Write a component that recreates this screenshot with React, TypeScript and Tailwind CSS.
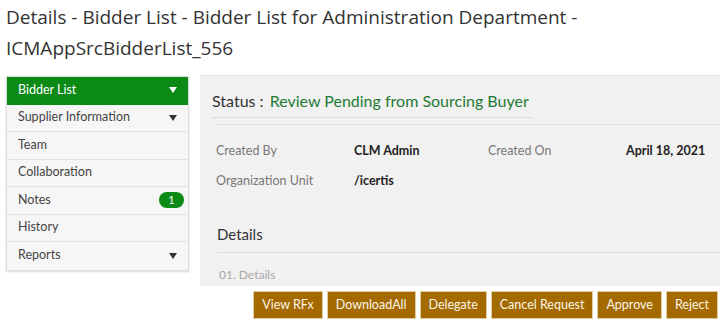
const navItems = [
  { label: 'Bidder List', caret: true, active: true },
  { label: 'Supplier Information', caret: true },
  { label: 'Team' },
  { label: 'Collaboration' },
  { label: 'Notes', badge: '1' },
  { label: 'History' },
  { label: 'Reports', caret: true },
]

const actions = ['View RFx', 'DownloadAll', 'Delegate', 'Cancel Request', 'Approve', 'Reject']

function Caret({ white }: { white?: boolean }) {
  return (
    <svg width="8" height="6" viewBox="0 0 8 6" className="mr-[7px]">
      <path d="M0 0 L8 0 L4 6 Z" fill={white ? '#ffffff' : '#333333'} />
    </svg>
  )
}

export default function App() {
  return (
    <div className="w-[720px] h-[326px] bg-white overflow-hidden" style={{ fontFamily: 'Lato, "Open Sans", sans-serif' }}>
      {/* Page title */}
      <h1
        className="pl-[6px] pt-[2px] text-[19px] leading-[31px] text-[#333333] font-normal"
        style={{ fontFamily: '"Open Sans", "Noto Sans", sans-serif' }}
      >
        Details - Bidder List - Bidder List for Administration Department -<br />
        ICMAppSrcBidderList_556
      </h1>

      <div className="flex mt-[11px]">
        {/* Sidebar */}
        <div className="w-[183px] ml-[6px] mt-[1px] self-start border border-[#dddddd] shadow-[0_1px_2px_rgba(0,0,0,0.15)]">
          {navItems.map((item) => (
            <div
              key={item.label}
              className={`h-[27.5px] flex items-center justify-between pl-[11px] pr-[4px] text-[12.5px] border-b last:border-b-0 ${
                item.active
                  ? 'bg-[#0b8a16] text-white border-[#0b8a16]'
                  : 'bg-[#f6f6f6] text-[#444444] border-[#e2e2e2]'
              }`}
            >
              <span>{item.label}</span>
              {item.caret && <Caret white={item.active} />}
              {item.badge && (
                <span className="h-[16px] w-[25px] rounded-full bg-[#0b8a16] text-white text-[11px] flex items-center justify-center">
                  {item.badge}
                </span>
              )}
            </div>
          ))}
        </div>

        {/* Main panel */}
        <div className="flex-1 ml-[11px]">
          <div className="bg-[#f2f1f1] h-[211px] pt-[15px] border-t border-[#e6e6e6]">
            <div className="ml-[12px] w-[321px] pb-[6px] border-b border-[#dcdcdc] text-[16px] leading-[20px]">
              <span className="text-[#333333]">Status : </span>
              <span className="text-[#1f7a34] ml-[2px]">Review Pending from Sourcing Buyer</span>
            </div>
            <div className="ml-[16px] mt-[6px] border-t border-[#dedede] pt-[11px] text-[12.5px]">
              <div className="grid grid-cols-[138px_134px_138px_1fr] h-[30px] items-center">
                <span className="text-[#777777]">Created By</span>
                <span className="text-[#222222] font-bold">CLM Admin</span>
                <span className="text-[#777777]">Created On</span>
                <span className="text-[#222222] font-bold">April 18, 2021</span>
              </div>
              <div className="grid grid-cols-[138px_134px_138px_1fr] h-[30px] items-center">
                <span className="text-[#777777]">Organization Unit</span>
                <span className="text-[#222222] font-bold">/icertis</span>
              </div>
            </div>
            <div className="ml-[17px] mt-[28px] pb-[8px] border-b border-[#dcdcdc] text-[15px] leading-[20px] text-[#333333]">
              Details
            </div>
            <div className="ml-[19px] mt-[13px] text-[12px] text-[#a8a8a8]">01. Details</div>
          </div>

          {/* Action buttons */}
          <div className="flex justify-end gap-[4px] mt-[5px] pr-[2px]">
            {actions.map((a) => (
              <button
                key={a}
                className="h-[28px] px-[8px] bg-[#a46a00] border border-[#e0cfa6] text-[12.5px] text-[#fbf4e6]"
              >
                {a}
              </button>
            ))}
          </div>
        </div>
      </div>
    </div>
  )
}
